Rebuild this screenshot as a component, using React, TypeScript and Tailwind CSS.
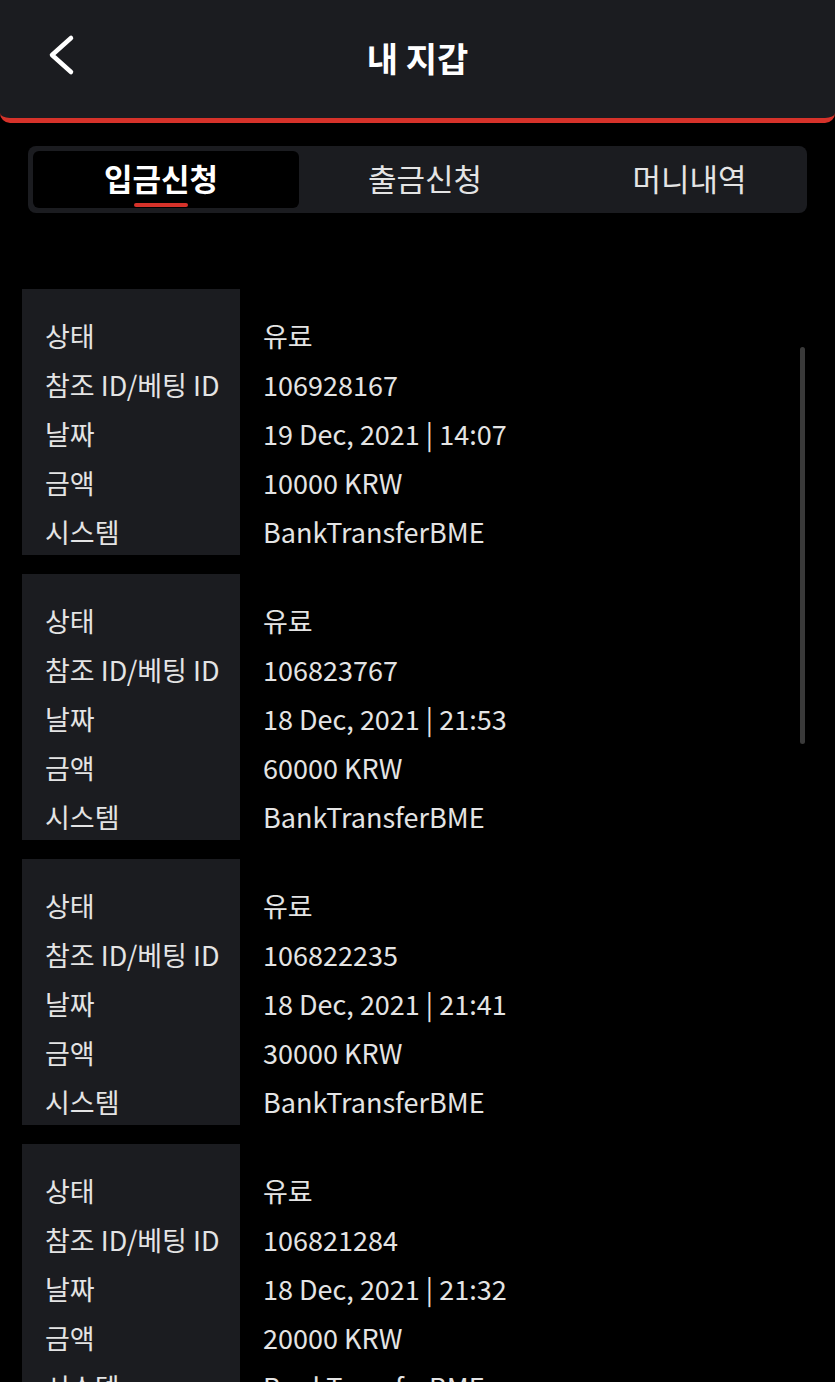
const records = [
  { id: "106928167", date: "19 Dec, 2021 | 14:07", amount: "10000 KRW" },
  { id: "106823767", date: "18 Dec, 2021 | 21:53", amount: "60000 KRW" },
  { id: "106822235", date: "18 Dec, 2021 | 21:41", amount: "30000 KRW" },
  { id: "106821284", date: "18 Dec, 2021 | 21:32", amount: "20000 KRW" },
]

function RecordCard({ id, date, amount }: { id: string; date: string; amount: string }) {
  const rows = [
    ["상태", "유료"],
    ["참조 ID/베팅 ID", id],
    ["날짜", date],
    ["금액", amount],
    ["시스템", "BankTransferBME"],
  ]
  return (
    <div className="flex h-[266px]">
      <div className="w-[218px] shrink-0 bg-[#1b1c20] pl-[23px] pt-[22px] text-[#e4e4e4]">
        {rows.map(([label]) => (
          <div key={label} className="h-[49px] leading-[49px] whitespace-nowrap">
            {label}
          </div>
        ))}
      </div>
      <div className="pl-[23px] pt-[22px] text-[#e4e4e4]">
        {rows.map(([label, value]) => (
          <div key={label} className="h-[49px] leading-[49px] whitespace-nowrap">
            {value}
          </div>
        ))}
      </div>
    </div>
  )
}

export default function App() {
  return (
    <div
      className="relative h-[1382px] w-[835px] overflow-hidden bg-black text-[27px]"
      style={{ fontFamily: '"Noto Sans CJK KR", "Noto Sans", sans-serif' }}
    >
      <header className="relative flex h-[123px] items-center justify-center rounded-b-[10px] border-b-[5px] border-[#d6322a] bg-[#1b1c20]">
        <button className="absolute left-[46px] top-[34px] text-white">
          <svg width="30" height="42" viewBox="0 0 30 42" fill="none">
            <polyline
              points="25,4 6,21 25,38"
              stroke="currentColor"
              strokeWidth="4.5"
              strokeLinecap="round"
              strokeLinejoin="round"
            />
          </svg>
        </button>
        <h1 className="-mt-[4px] text-[34px] font-bold text-white">내 지갑</h1>
      </header>

      <div className="mx-[28px] mt-[23px] flex h-[67px] rounded-[8px] bg-[#1b1c20] p-[5px] text-[31px]">
        <div className="relative flex w-[266px] items-center justify-center rounded-[6px] bg-black pr-[10px] font-bold text-white">
          <span className="-mt-[2px]">입금신청</span>
          <span className="absolute bottom-[1px] left-[101px] h-[4px] w-[54px] rounded-full bg-[#d6322a]" />
        </div>
        <div className="flex w-[252px] items-center justify-center text-[#e4e4e4]">
          <span className="-mt-[2px]">출금신청</span>
        </div>
        <div className="flex flex-1 items-center justify-center pl-[26px] text-[#e4e4e4]">
          <span className="-mt-[2px]">머니내역</span>
        </div>
      </div>

      <div className="mx-[22px] mt-[76px] flex flex-col gap-[19px]">
        {records.map((r) => (
          <RecordCard key={r.id} {...r} />
        ))}
      </div>

      <div className="absolute left-[800px] top-[347px] h-[397px] w-[5px] rounded-full bg-[#3a3a3a]" />
    </div>
  )
}
